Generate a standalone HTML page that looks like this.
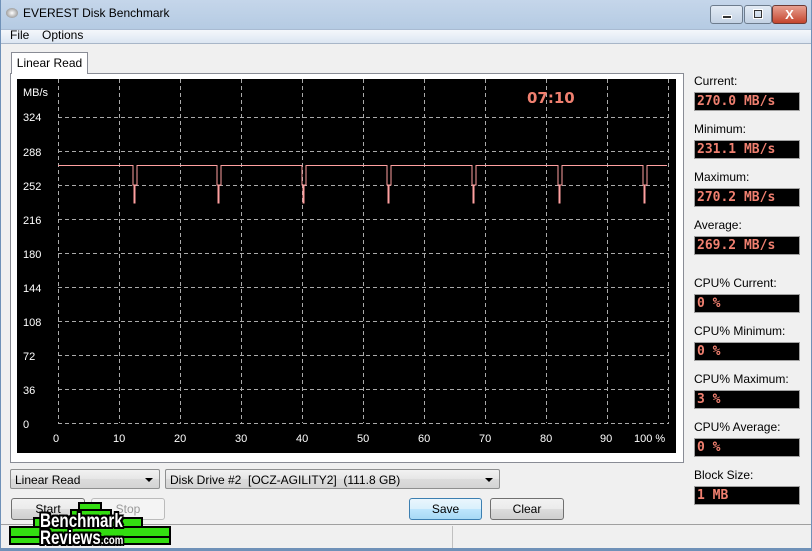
<!DOCTYPE html>
<html><head><style>
body{margin:0;width:812px;height:551px;overflow:hidden;font-family:"Liberation Sans",sans-serif;font-size:12px;background:#f0f0f0;position:relative}
.a{position:absolute}
.lbl{position:absolute;left:694px;font-size:12px;color:#000}
.box{position:absolute;left:694px;width:102px;height:17px;background:#000;border:1px solid #a0a0a0;color:#f08070;font-family:"DejaVu Sans Mono","Liberation Mono",monospace;font-weight:bold;font-size:13px;line-height:17px;padding-left:2px;box-sizing:content-box}
.btn{position:absolute;height:20px;border:1px solid #707070;border-radius:3px;background:linear-gradient(#f2f2f2,#ebebeb 50%,#dddddd 50%,#cfcfcf);text-align:center;line-height:20px;font-size:12px}
.combo{position:absolute;height:20px;border:1px solid #8e8f8f;border-radius:2px;background:linear-gradient(#f2f2f2,#e6e6e6 50%,#dcdcdc 50%,#d4d4d4);line-height:20px;padding-left:4px;box-sizing:border-box;font-size:12px}
.arr{position:absolute;right:6px;top:8px;width:0;height:0;border-left:4px solid transparent;border-right:4px solid transparent;border-top:4px solid #000}
.g{position:absolute;background:#33dd11;border:2px solid #000}
.lt{position:absolute;color:#fff;font-weight:bold;font-size:19px;line-height:17px;font-family:'Liberation Sans Narrow','Liberation Sans',sans-serif;transform:scaleX(0.8);transform-origin:left;text-shadow:-2px 0 #000,2px 0 #000,0 -2px #000,0 2px #000,-2px -2px #000,2px 2px #000,-2px 2px #000,2px -2px #000}
</style></head><body>
<div class="a" style="left:0;top:0;width:812px;height:29px;background:linear-gradient(#c5d6ea,#b5cbe3);border-bottom:1px solid #a9bbd2"></div>
<div class="a" style="left:6px;top:8px;width:12px;height:10px;border-radius:50%;background:radial-gradient(#fff,#777)"></div>
<div class="a" style="left:23px;top:6px;font-size:12px">EVEREST Disk Benchmark</div>
<div class="a" style="left:710px;top:5px;width:31px;height:17px;border:1px solid #6d7c8d;border-radius:3px;background:linear-gradient(#e3ebf5,#c3d2e4)"><div class="a" style="left:11px;top:9px;width:8px;height:2px;background:#333;border:1px solid #fff"></div></div>
<div class="a" style="left:744px;top:5px;width:26px;height:17px;border:1px solid #6d7c8d;border-radius:3px;background:linear-gradient(#e3ebf5,#c3d2e4)"><div class="a" style="left:9px;top:4px;width:6px;height:6px;border:1px solid #333;outline:1px solid #fff"></div></div>
<div class="a" style="left:772px;top:5px;width:33px;height:17px;border:1px solid #6d3a34;border-radius:3px;background:linear-gradient(#e8a192,#c4452d);color:#fff;font-weight:bold;text-align:center;line-height:17px;font-size:13px">X</div>
<div class="a" style="left:0;top:30px;width:812px;height:13px;background:linear-gradient(#f4f7fb,#dce6f2);border-bottom:1px solid #a8b6c8"></div>
<div class="a" style="left:10px;top:28px">File</div><div class="a" style="left:42px;top:28px">Options</div>
<div class="a" style="left:10px;top:73px;width:672px;height:388px;border:1px solid #898c95;background:#fff"></div>
<div class="a" style="left:11px;top:52px;width:75px;height:21px;border:1px solid #898c95;border-bottom:none;background:#fff;text-align:center;line-height:20px">Linear Read</div>
<svg class="a" style="left:17px;top:79px" width="659" height="374" viewBox="17 79 659 374">
<rect x="17" y="79" width="659" height="374" fill="#000"/>
<g stroke="#aaa" stroke-width="1" stroke-dasharray="4,3" fill="none">
<path d="M58.5 79V423M119.5 79V423M180.5 79V423M241.5 79V423M302.5 79V423M363.5 79V423M424.5 79V423M485.5 79V423M546.5 79V423M607.5 79V423M668.5 79V423"/>
<path d="M58 117.5H669M58 151.5H669M58 185.5H669M58 219.5H669M58 253.5H669M58 287.5H669M58 321.5H669M58 355.5H669M58 389.5H669M58 423.5H669"/>
</g>
<path fill="none" stroke="#ffa0a0" stroke-width="1" d="M58 165.5H133V185H134V203H135V185H137V165.5H217V185H218V203H219V185H221V165.5H302V185H303V203H304V185H306V165.5H387V185H388V203H389V185H391V165.5H472V185H473V203H474V185H476V165.5H558V185H559V203H560V185H562V165.5H643V185H644V203H645V185H647V165.5H667"/>
<g fill="#fff" font-family="Liberation Sans" font-size="11">
<text x="23" y="96">MB/s</text>
<text x="23" y="121">324</text><text x="23" y="156">288</text><text x="23" y="190">252</text><text x="23" y="224">216</text><text x="23" y="258">180</text><text x="23" y="292">144</text><text x="23" y="326">108</text><text x="23" y="360">72</text><text x="23" y="394">36</text><text x="23" y="428">0</text>
<text x="53" y="442">0</text><text x="113" y="442">10</text><text x="174" y="442">20</text><text x="235" y="442">30</text><text x="296" y="442">40</text><text x="357" y="442">50</text><text x="418" y="442">60</text><text x="479" y="442">70</text><text x="540" y="442">80</text><text x="600" y="442">90</text><text x="634" y="442">100 %</text>
</g>
<text x="527" y="103" fill="#f08070" font-family="DejaVu Sans" font-weight="bold" font-size="15">07:10</text>
</svg>
<div class="lbl" style="top:74px">Current:</div><div class="box" style="top:92px">270.0 MB/s</div>
<div class="lbl" style="top:122px">Minimum:</div><div class="box" style="top:140px">231.1 MB/s</div>
<div class="lbl" style="top:170px">Maximum:</div><div class="box" style="top:188px">270.2 MB/s</div>
<div class="lbl" style="top:218px">Average:</div><div class="box" style="top:236px">269.2 MB/s</div>
<div class="lbl" style="top:276px">CPU% Current:</div><div class="box" style="top:294px">0 %</div>
<div class="lbl" style="top:324px">CPU% Minimum:</div><div class="box" style="top:342px">0 %</div>
<div class="lbl" style="top:372px">CPU% Maximum:</div><div class="box" style="top:390px">3 %</div>
<div class="lbl" style="top:420px">CPU% Average:</div><div class="box" style="top:438px">0 %</div>
<div class="lbl" style="top:468px">Block Size:</div><div class="box" style="top:486px">1 MB</div>
<div class="combo" style="left:10px;top:469px;width:150px">Linear Read<div class="arr"></div></div>
<div class="combo" style="left:165px;top:469px;width:335px">Disk Drive #2&nbsp; [OCZ-AGILITY2]&nbsp; (111.8 GB)<div class="arr"></div></div>
<div class="btn" style="left:11px;top:498px;width:72px">Start</div>
<div class="btn" style="left:91px;top:498px;width:72px;color:#999;border-color:#bbb;background:#f4f4f4">Stop</div>
<div class="btn" style="left:409px;top:498px;width:71px;border-color:#3c7fb1;background:linear-gradient(#eaf6fd,#d9f0fc 50%,#bee6fd 50%,#a7d9f5)">Save</div>
<div class="btn" style="left:490px;top:498px;width:72px">Clear</div>
<div class="a" style="left:0;top:524px;width:812px;height:1px;background:#a0a0a0"></div>
<div class="a" style="left:452px;top:526px;width:1px;height:22px;background:#c0c0c0"></div>
<div class="a" style="left:0;top:548px;width:812px;height:3px;background:#6f91b8"></div>
<div class="a" style="left:0;top:0;width:1px;height:551px;background:#6f91b8"></div>
<div class="a" style="left:811px;top:0;width:1px;height:551px;background:#6f91b8"></div>
<!-- logo -->
<div class="g" style="left:78px;top:502px;width:20px;height:6px"></div>
<div class="g" style="left:70px;top:509px;width:38px;height:7px"></div>
<div class="g" style="left:33px;top:517px;width:106px;height:7px"></div>
<div class="g" style="left:9px;top:526px;width:158px;height:8px"></div>
<div class="g" style="left:9px;top:536px;width:158px;height:5px"></div>
<div class="lt" style="left:40px;top:513px">Benchmark</div>
<div class="lt" style="left:40px;top:530px">Reviews<span style="font-size:12px">.com</span></div>
</body></html>
